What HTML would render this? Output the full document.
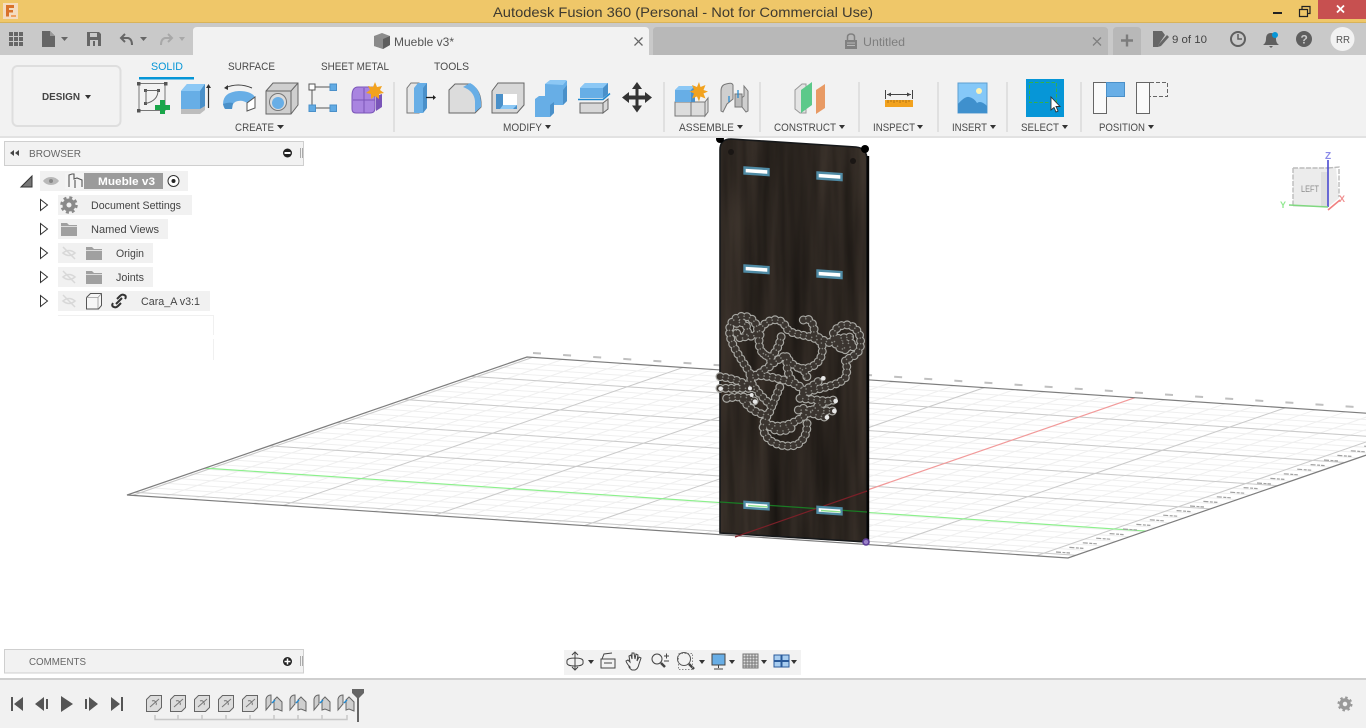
<!DOCTYPE html>
<html lang="en"><head><meta charset="utf-8"><title>Autodesk Fusion 360</title>
<style>
html,body{margin:0;padding:0;background:#fff;width:1366px;height:728px;overflow:hidden}
svg{display:block;position:absolute;left:0;top:0}
text{font-family:"Liberation Sans",sans-serif;font-size:11px;fill:#4a4a4a}
.g{fill:none;stroke:#efefef;stroke-width:1;vector-effect:non-scaling-stroke}
.n{fill:none;vector-effect:non-scaling-stroke}
.t{font-size:11px;fill:#4a4a4a}
</style></head><body>
<svg width="1366" height="728" viewBox="0 0 1366 728" xmlns="http://www.w3.org/2000/svg">
<defs>
<filter id="wood" x="0" y="0" width="1" height="1" color-interpolation-filters="sRGB">
<feTurbulence type="fractalNoise" baseFrequency="0.07 0.005" numOctaves="3" seed="7"/>
<feColorMatrix values="0.2 0 0 0 0.1  0.17 0 0 0 0.085  0.15 0 0 0 0.07  0 0 0 0 1"/>
</filter>
<linearGradient id="woodg" x1="0" x2="1" y1="0" y2="0"><stop offset="0" stop-color="#000" stop-opacity=".02"/><stop offset=".5" stop-color="#000" stop-opacity=".22"/><stop offset="1" stop-color="#000" stop-opacity=".04"/></linearGradient>
<clipPath id="plank"><path d="M731 139L856 147Q867 148 867 160V542L720 533V150Q720 139 731 139Z"/></clipPath>
<path id="knot" d="M150 220C120 170 80 120 90 80C100 40 160 35 172 85C178 110 150 115 125 100M110 70C130 60 150 80 140 105C125 125 105 110 110 85M175 100C190 60 240 40 260 85C275 110 340 100 365 130C375 170 350 210 300 205C270 195 265 170 262 180M180 105C170 140 185 170 215 170C240 140 240 120 245 105M190 160C210 170 220 185 205 205M260 170C260 220 265 240 310 270C340 260 360 240 365 235M60 230C100 235 140 250 165 270M60 265L150 265M80 295C110 290 140 285 165 305M150 225C200 225 270 240 310 265M250 170C230 180 180 220 150 240C170 280 200 300 215 320L240 260M130 300C150 330 180 345 205 345M215 320C210 345 185 360 190 390C200 430 250 445 290 435C315 420 325 390 320 360M200 370C240 390 280 370 310 350C340 330 370 300 405 300M295 330L400 333M310 325C340 345 365 350 380 352M300 295L400 305M210 380C230 400 260 395 280 380M310 280C350 265 410 260 435 235C445 210 440 190 435 180C460 170 490 160 480 110C470 70 420 60 400 100C400 130 410 145 440 150M420 130L455 130M415 115L460 110M425 145L460 140M310 60C325 45 350 80 340 100C360 120 400 135 395 125M300 205C320 215 330 235 310 235"/>
</defs>

<!-- GRID -->
<g transform="matrix(941 63 400 -138 127 495)">
<path class="g" d="M.006 0v1m.032-1v1m.032-1v1m.032-1v1m.032-1v1m.032-1v1m.032-1v1m.032-1v1m.032-1v1m.032-1v1m.032-1v1m.032-1v1m.032-1v1m.032-1v1m.032-1v1m.032-1v1m.032-1v1m.032-1v1m.032-1v1m.032-1v1m.032-1v1m.032-1v1m.032-1v1m.032-1v1m.032-1v1m.032-1v1m.032-1v1m.032-1v1m.032-1v1m.032-1v1m.032-1v1"/>
<path class="g" d="M0 .02h1m-1 .0336h1m-1 .0336h1m-1 .0336h1m-1 .0336h1m-1 .0336h1m-1 .0336h1m-1 .0336h1m-1 .0336h1m-1 .0336h1m-1 .0336h1m-1 .0336h1m-1 .0336h1m-1 .0336h1m-1 .0336h1m-1 .0336h1m-1 .0336h1m-1 .0336h1m-1 .0336h1m-1 .0336h1m-1 .0336h1m-1 .0336h1m-1 .0336h1m-1 .0336h1m-1 .0336h1m-1 .0336h1m-1 .0336h1m-1 .0336h1m-1 .0336h1"/>
<path class="n" stroke="#cacaca" stroke-width="1" d="M.166 0v1M.326 0v1M.486 0v1M.806 0v1M.966 0v1M.006 0v1M0 .02h1M0 .356h1M0 .524h1M0 .692h1M0 .86h1"/>
<path class="n" stroke="#8cf08c" stroke-width="1.200" d="M0 .195h1"/>
<path class="n" stroke="#f29a9a" stroke-width="1.200" d="M.646 0v1"/>
<path class="n" stroke="#7d7d7d" stroke-width="1.200" d="M0 0h1v1h-1z"/>
</g>
<path d="M533 353L1366 407.700" stroke="#c0c0c0" stroke-width="2" stroke-dasharray="8 22.160" fill="none"/>
<path d="M1056 552l14 1m-.6-5.600l14 1m-.6-5.600l14 1m-.6-5.600l14 1m-.6-5.600l14 1m-.6-5.600l14 1m-.6-5.600l14 1m-.6-5.600l14 1m-.6-5.600l14 1m-.6-5.600l14 1m-.6-5.600l14 1m-.6-5.600l14 1m-.6-5.600l14 1m-.6-5.600l14 1m-.6-5.600l14 1m-.6-5.600l14 1m-.6-5.600l14 1m-.6-5.600l14 1m-.6-5.600l14 1m-.6-5.600l14 1m-.6-5.600l14 1m-.6-5.600l14 1m-.6-5.600l14 1m-.6-5.600l14 1" stroke="#a0a0a0" stroke-width="1.200" stroke-dasharray="5 1.500 3 1" fill="none"/>

<!-- PLANK -->
<g clip-path="url(#plank)">
<rect x="715" y="135" width="156" height="412" fill="#2e2723" filter="url(#wood)"/>
<rect x="715" y="135" width="156" height="412" fill="url(#woodg)"/>
</g>
<path d="M731 139L856 147Q867 148 867 160V542L720 533V150Q720 139 731 139Z" fill="none" stroke="#16181a" stroke-width="1.600"/>
<path d="M868 156V543" stroke="#050505" stroke-width="2.400"/>
<circle cx="720" cy="139" r="4" fill="#000"/><circle cx="865" cy="149" r="4" fill="#000"/>
<circle cx="731" cy="152" r="3" fill="#1a1614"/><circle cx="853" cy="161" r="3" fill="#1a1614"/>
<path d="M720 502L867 512" stroke="#1a7a24" stroke-width="1.300"/>
<path d="M735 537L867 491" stroke="#7a2028" stroke-width="1.200"/>
<g fill="#fff" stroke="#4f8ba5" stroke-width="2.400">
<path d="M744.500 167.500l24 1.600v6l-24-1.600z"/><path d="M817.500 172.500l24 1.600v6l-24-1.600z"/>
<path d="M744.500 265.500l24 1.600v6l-24-1.600z"/><path d="M817.500 270.500l24 1.600v6l-24-1.600z"/>
<path d="M744.500 501.800l24 1.600v6l-24-1.600z"/><path d="M817.500 506.800l24 1.600v6l-24-1.600z"/>
</g>
<path d="M748 505.500l20 1.400M821 510.500l20 1.400" stroke="#8fe28f" stroke-width="1.400"/>
<!-- knot -->
<g transform="translate(700 300) scale(.3333)" fill="none" stroke-linecap="round" stroke-linejoin="round">
<use href="#knot" stroke="#a8a8a3" stroke-width="27" stroke-dasharray="0 17"/>
<use href="#knot" stroke="#3b3530" stroke-width="20" stroke-dasharray="0 17"/>
<use href="#knot" stroke="#85857f" stroke-width="5" stroke-dasharray="0 17" stroke-dashoffset="8.500"/>
<g fill="#e8e8e8" stroke="none"><circle cx="62" cy="266" r="7"/><circle cx="165" cy="305" r="7"/><circle cx="155" cy="285" r="6"/><circle cx="150" cy="265" r="6"/><circle cx="370" cy="235" r="7"/><circle cx="407" cy="303" r="7"/><circle cx="403" cy="333" r="7"/><circle cx="381" cy="352" r="7"/></g>
</g>
<circle cx="866" cy="542" r="3" fill="#9a80c8" stroke="#5c3d96" stroke-width="1.600"/>

<!-- VIEWCUBE -->
<path d="M1293 168L1336 167L1339 198L1328 207H1293Z" fill="#ececec"/>
<path d="M1321 172H1328V207H1321Z" fill="#dedede"/>
<path d="M1293 168H1328M1293 168V205M1328 168L1339 167V197" fill="none" stroke="#bcbcbc" stroke-width="1.400" stroke-dasharray="5 1.500"/>
<text x="1301" y="192" style="font-size:9px;fill:#8c8c8c" textLength="18" lengthAdjust="spacingAndGlyphs">LEFT</text>
<path d="M1328 207V160" stroke="#4a4ad0" stroke-width="1.600"/><path d="M1328 207L1289 205" stroke="#80d880" stroke-width="1.600"/><path d="M1328 210L1340 200" stroke="#f08080" stroke-width="1.600"/>
<text x="1325" y="159" style="font-size:10px;fill:#8a8ae8;font-weight:bold">Z</text>
<text x="1280" y="208" style="font-size:9px;fill:#90e890;font-weight:bold">Y</text>
<text x="1339" y="202" style="font-size:9px;fill:#f09090;font-weight:bold">X</text>

<!-- TITLE BAR -->
<rect width="1366" height="23" fill="#efc769"/><rect y="22" width="1366" height="1" fill="#d8b35a"/>
<rect x="3" y="3" width="15" height="16" fill="#f4dcc0"/>
<path d="M6 5h8v3h-5v2h4v2.500h-4v4h-3z" fill="#d9722a"/><path d="M11 15h5v2h-5z" fill="#f0a060"/>
<text x="493" y="17" style="font-size:14px;fill:#3e3a30" textLength="380" lengthAdjust="spacingAndGlyphs">Autodesk Fusion 360 (Personal - Not for Commercial Use)</text>
<rect x="1273" y="12" width="9" height="2" fill="#222"/>
<path d="M1299.500 9.500h8v7h-8zM1302 9V6.500h8v7h-2.500" fill="none" stroke="#222" stroke-width="1.200"/>
<rect x="1318" y="0" width="48" height="19" fill="#c75050"/>
<path d="M1337 5.500l7 7M1344 5.500l-7 7" stroke="#fff" stroke-width="1.800"/>

<!-- TAB ROW -->
<rect y="23" width="1366" height="32" fill="#c9c9c9"/>
<path d="M193 55V31q0-4 4-4H645q4 0 4 4V55z" fill="#f2f2f2"/>
<path d="M653 55V31q0-4 4-4H1104q4 0 4 4V55z" fill="#b8b8b8"/>
<path d="M1113 55V31q0-4 4-4H1137q4 0 4 4V55z" fill="#b8b8b8"/>
<g fill="#666"><rect x="9" y="32" width="4" height="4"/><rect x="14" y="32" width="4" height="4"/><rect x="19" y="32" width="4" height="4"/><rect x="9" y="37" width="4" height="4"/><rect x="14" y="37" width="4" height="4"/><rect x="19" y="37" width="4" height="4"/><rect x="9" y="42" width="4" height="4"/><rect x="14" y="42" width="4" height="4"/><rect x="19" y="42" width="4" height="4"/></g>
<path d="M42 31h8l5 5v11H42z" fill="#666"/><path d="M50 31v5h5z" fill="#999"/><path d="M61 37h7l-3.500 4z" fill="#666"/>
<path d="M87 32h12l2 2v12H87z" fill="#666"/><rect x="90" y="33" width="7" height="4" fill="#c9c9c9"/><rect x="90" y="40" width="8" height="6" fill="#c9c9c9"/><rect x="93" y="41" width="2" height="5" fill="#666"/>
<path d="M125 34l-4 4 4 4M121 38h7q4 1 4 7" fill="none" stroke="#666" stroke-width="2"/><path d="M140 37h7l-3.500 4z" fill="#666"/>
<path d="M168 34l4 4-4 4M172 38h-7q-4 1-4 7" fill="none" stroke="#a8a8a8" stroke-width="2"/><path d="M179 37h6l-3 4z" fill="#a8a8a8"/>
<path d="M374 36l8-3 8 3v9l-7 4-9-3z" fill="#8c8c8c"/><path d="M374 36l9 3v10l-9-3z" fill="#8a8a8a"/><path d="M383 39l7-3v9l-7 4z" fill="#5e5e5e"/>
<text x="394" y="46" style="font-size:12px;fill:#555" textLength="60" lengthAdjust="spacingAndGlyphs">Mueble v3*</text>
<path d="M634.500 37.500l8 8M642.500 37.500l-8 8" stroke="#666" stroke-width="1.300"/>
<rect x="845" y="40" width="12" height="9" fill="#808080"/><path d="M847.500 40v-3q0-3 3.500-3t3.500 3v3" fill="none" stroke="#808080" stroke-width="1.500"/>
<path d="M847 43h8M847 45.500h8" stroke="#b8b8b8"/>
<text x="863" y="46" style="font-size:12px;fill:#7e7e7e" textLength="42" lengthAdjust="spacingAndGlyphs">Untitled</text>
<path d="M1093 37.500l8 8M1101 37.500l-8 8" stroke="#808080" stroke-width="1.300"/>
<path d="M1121 40.500h12M1127 34.500v12" stroke="#7c7c7c" stroke-width="2.400"/>
<path d="M1153 31h9l3 4-6 9-1 3h-5z" fill="#666"/><path d="M1159 44l8-9 2 2-8 9-3 1z" fill="#666"/>
<text x="1172" y="43" style="font-size:11px;fill:#444" textLength="35" lengthAdjust="spacingAndGlyphs">9 of 10</text>
<circle cx="1238" cy="39" r="7" fill="#c9c9c9" stroke="#5f5f5f" stroke-width="2"/><path d="M1238 34v5h4" fill="none" stroke="#5f5f5f" stroke-width="1.500"/>
<path d="M1271 33q5 0 5 6 0 4 3 6h-16q3-2 3-6 0-6 5-6zM1269 46h4l-2 2z" fill="#5f5f5f"/><circle cx="1275" cy="35" r="3" fill="#0696d7"/>
<circle cx="1304" cy="39" r="8" fill="#5f5f5f"/><text x="1300.500" y="43.500" style="font-size:12px;font-weight:bold;fill:#c9c9c9">?</text>
<circle cx="1342.500" cy="39" r="12" fill="#f2f2f2"/><text x="1336" y="43" style="font-size:10.500px;fill:#555" textLength="14" lengthAdjust="spacingAndGlyphs">RR</text>

<!-- TOOLBAR -->
<rect y="55" width="1366" height="81" fill="#f2f2f2"/><rect y="136" width="1366" height="2" fill="#e2e2e2"/>
<rect x="12.500" y="66" width="108" height="60" rx="5" fill="#f2f2f2" stroke="#dedede" stroke-width="2"/>
<text x="42" y="100" style="font-size:10.500px;font-weight:bold;fill:#444" textLength="38" lengthAdjust="spacingAndGlyphs">DESIGN</text><path d="M85 95h6l-3 4z" fill="#333"/>
<text x="151" y="70" style="fill:#0696d7;font-size:11px" textLength="32" lengthAdjust="spacingAndGlyphs">SOLID</text><rect x="139" y="77" width="55" height="2.500" fill="#0696d7"/>
<text class="t" x="228" y="70" textLength="47" lengthAdjust="spacingAndGlyphs">SURFACE</text>
<text class="t" x="321" y="70" textLength="68" lengthAdjust="spacingAndGlyphs">SHEET METAL</text>
<text class="t" x="434" y="70" textLength="35" lengthAdjust="spacingAndGlyphs">TOOLS</text>
<g fill="#e0e0e0"><rect x="393" y="82" width="2" height="50"/><rect x="663" y="82" width="2" height="50"/><rect x="759" y="82" width="2" height="50"/><rect x="858" y="82" width="2" height="50"/><rect x="937" y="82" width="2" height="50"/><rect x="1006" y="82" width="2" height="50"/><rect x="1080" y="82" width="2" height="50"/></g>
<text class="t" x="235" y="131" textLength="39" lengthAdjust="spacingAndGlyphs">CREATE</text><path d="M277 125h7l-3.500 4z" fill="#333"/>
<text class="t" x="503" y="131" textLength="39" lengthAdjust="spacingAndGlyphs">MODIFY</text><path d="M545 125h6l-3 4z" fill="#333"/>
<text class="t" x="679" y="131" textLength="55" lengthAdjust="spacingAndGlyphs">ASSEMBLE</text><path d="M737 125h6l-3 4z" fill="#333"/>
<text class="t" x="774" y="131" textLength="62" lengthAdjust="spacingAndGlyphs">CONSTRUCT</text><path d="M839 125h6l-3 4z" fill="#333"/>
<text class="t" x="873" y="131" textLength="42" lengthAdjust="spacingAndGlyphs">INSPECT</text><path d="M917 125h6l-3 4z" fill="#333"/>
<text class="t" x="952" y="131" textLength="35" lengthAdjust="spacingAndGlyphs">INSERT</text><path d="M990 125h6l-3 4z" fill="#333"/>
<text class="t" x="1021" y="131" textLength="38" lengthAdjust="spacingAndGlyphs">SELECT</text><path d="M1062 125h6l-3 4z" fill="#333"/>
<text class="t" x="1099" y="131" textLength="46" lengthAdjust="spacingAndGlyphs">POSITION</text><path d="M1148 125h6l-3 4z" fill="#333"/>

<!-- sketch -->
<path d="M139 83.500h26v27h-26z" fill="none" stroke="#777" stroke-width="1"/>
<g fill="#555"><rect x="137" y="82" width="3.500" height="3.500"/><rect x="164" y="82" width="3.500" height="3.500"/><rect x="137" y="109" width="3.500" height="3.500"/><rect x="144" y="89" width="3" height="3"/><rect x="157" y="89" width="3" height="3"/><rect x="144" y="102" width="3" height="3"/></g>
<path d="M146 90.500h12q0 10-12 13z" fill="none" stroke="#666"/>
<path d="M160 100h5v5h5v5h-5v4h-5v-4h-5v-5h5z" fill="#1aa64a"/>
<!-- extrude -->
<path d="M181 91l6-7h18v23l-5 2H181z" fill="#67aee6"/><path d="M181 91l6-7h18l-5 7z" fill="#8cc8f5"/><path d="M200 91l5-7v22l-5 3z" fill="#4a90c9"/>
<path d="M181 109h19v5H181zM200 109l5-3v4l-5 4z" fill="#bdbdbd"/>
<path d="M208.500 108V86" stroke="#333" stroke-width="1.200"/><path d="M206 88l2.500-4 2.500 4z" fill="#333"/>
<!-- revolve -->
<path d="M225 88q13-6 27 0" fill="none" stroke="#444" stroke-width="1"/><path d="M224 88l4-3v5z" fill="#333"/>
<path d="M223 104q0-12 16-13 12 0 16 6l-8 6q-4-3-9-2-6 1-6 8h-7z" fill="#68aee6"/>
<path d="M223 104q1 5 3 5h6l1-6q-5-1-10 1z" fill="#4a90c9"/>
<path d="M247 103l8-6v11l-8 3z" fill="#fff" stroke="#555"/>
<!-- hole -->
<path d="M266 91l7-8h25v22l-7 9H266z" fill="#cfcfcf" stroke="#666" stroke-width="1"/><path d="M266 91h25l7-8M291 91v23" fill="none" stroke="#666"/>
<circle cx="278" cy="102" r="8.500" fill="#dcdcdc" stroke="#777"/><circle cx="278" cy="103" r="6" fill="#68aee6"/>
<!-- rect pattern -->
<path d="M312 87h21M312 87v21M312 108h21" stroke="#555" fill="none"/>
<rect x="309" y="84" width="6" height="6" fill="#fff" stroke="#555"/>
<g fill="#62abe4" stroke="#4a90c9"><rect x="330" y="84" width="6.500" height="6.500"/><rect x="309" y="105" width="6.500" height="6.500"/><rect x="330" y="105" width="6.500" height="6.500"/></g>
<!-- form -->
<path d="M358 87h14q3 0 3 3v18q0 5-5 5h-14q-4 0-4-4V96q0-9 6-9z" fill="#a984e0" stroke="#7a55b8"/>
<path d="M353 100h22M364 88v25" stroke="#7a55b8"/><path d="M376 96l6-2v13l-6 4z" fill="#7a55b8"/>
<path d="M375 82l2 5 5-1-2 4 4 3-5 1 0 5-4-3-4 3 0-5-5-1 4-3-2-4 5 1z" fill="#f2a21e"/>

<!-- press pull -->
<path d="M407 88l4-5h8v30h-12z" fill="#e6e6e6" stroke="#777"/><path d="M414 88l4-5h9v25l-4 5h-9z" fill="#67aee6"/><path d="M423 88l4-5v25l-4 5z" fill="#4a90c9"/>
<path d="M426 97.500h9" stroke="#222" stroke-width="1.300"/><path d="M433 95l3 2.500-3 2.500z" fill="#222"/>
<!-- fillet -->
<path d="M449 113V90l6-6h14q11 4 12 18v5l-6 6z" fill="#dcdcdc" stroke="#666"/>
<path d="M463 87l7-4q10 5 11 19v5l-6 5v-11q-1-10-12-14z" fill="#68aee6"/>
<!-- shell -->
<path d="M492 91l6-8h26v22l-7 8h-25z" fill="#d8d8d8" stroke="#666"/>
<rect x="496" y="94" width="21" height="15" fill="#fff"/><path d="M496 94h7v11h14v4h-21z" fill="#4a90c9"/><path d="M503 105h14l-4 4h-13z" fill="#8cc8f5"/>
<!-- combine -->
<path d="M545 93v-9l5-3h17v20l-4 4h-9v8l-4 4h-15v-18l4-3h6z" fill="#67aee6"/><path d="M563 90l4-5v16l-4 4z" fill="#4a90c9"/><path d="M545 84l5-4h17l-4 5z" fill="#8cc8f5"/><path d="M550 105l4-3v11l-4 4z" fill="#4a90c9"/>
<!-- split -->
<path d="M580 88l5-5h23v11l-5 4h-23z" fill="#67aee6"/><path d="M580 88l5-5h23l-5 5z" fill="#8cc8f5"/><path d="M603 88l5-5v11l-5 4z" fill="#4a90c9"/>
<path d="M578 99.500h25l7-6" stroke="#1e88d0" stroke-width="1.500" fill="none"/>
<path d="M580 103h23v10h-23zM603 103l5-4v10l-5 4z" fill="#d8d8d8" stroke="#666"/>
<!-- move -->
<path d="M637 82l5 7h-3.500v6.500H645V92l7 5.500-7 5.500v-3.500h-6.500v6h3.500l-5 7-5-7h3.500v-6H629v3.500l-7-5.500 7-5.500v3.500h6.500V89H632z" fill="#333"/>

<!-- new component -->
<path d="M675 102h16v14h-16zM691 102h14v14h-14zM705 102l3-4v14l-3 4z" fill="#dcdcdc" stroke="#777"/>
<path d="M675 90l4-4h16v16h-20z" fill="#67aee6"/><path d="M675 90l4-4h16l-4 4z" fill="#8cc8f5"/><path d="M691 90l4-4v16h-4z" fill="#4a90c9"/>
<path d="M699 82l1.500 5 5-2-2 5 4.500 1.500-4.500 2 2 5-5-2-1.500 5-2-5-5 2 2-5-4.500-2 4.500-1.500-2-5 5 2z" fill="#f2a21e"/>
<!-- joint -->
<path d="M721 91q0-6 5-7 6-2 7 1v14l-6 5-4 8-2-1z" fill="#cfcfcf" stroke="#777"/>
<path d="M739 100l5-4V86l4 5v20l-2 1-4-5h-3z" fill="#cfcfcf" stroke="#777"/><rect x="735" y="94" width="7" height="13" fill="#bcbcbc" stroke="#777"/>
<path d="M729 96v6M738 90v8" stroke="#1e88d0" stroke-width="1.200"/>

<!-- construct -->
<path d="M795 90l7-6h4v29h-6l-5-4z" fill="#e4e4e4" stroke="#999"/>
<path d="M801 90l11-8v23l-11 8z" fill="#5cc98a"/>
<path d="M816 90l9-6v24l-9 6z" fill="#e89a64"/>
<!-- inspect -->
<rect x="885" y="100" width="28" height="7" fill="#f2a21e"/><path d="M888 100v3M891 100v2M894 100v3M897 100v2M900 100v3M903 100v2M906 100v3M909 100v2" stroke="#a56a10" stroke-width=".8"/>
<path d="M885.500 90v9M912.500 90v9M887 94.500h24" stroke="#444"/><path d="M887 94.500l4-2v4zM911 94.500l-4-2v4z" fill="#444"/>
<!-- insert -->
<rect x="958" y="83" width="29" height="30" fill="#85c8f8" stroke="#5d9fd0"/>
<circle cx="979" cy="91" r="3" fill="#fdf3b4"/>
<path d="M958 113V104q7-8 11-7 5 1 8 6 4-3 10 3v7z" fill="#3f90cd"/>
<!-- select -->
<rect x="1026" y="79" width="38" height="38" fill="#0696d7"/>
<rect x="1029.500" y="82.500" width="27" height="20" fill="none" stroke="#35b04a" stroke-width="1" stroke-dasharray="3.500 2"/>
<path d="M1051 97v13l3-2.500 2 4.500 2-1-2-4.500h4z" fill="#fff" stroke="#333" stroke-width=".9"/>
<!-- position -->
<rect x="1093.500" y="82.500" width="13" height="31" fill="#fafafa" stroke="#666"/>
<rect x="1106.500" y="82.500" width="18" height="14" fill="#68aee6" stroke="#4a90c9"/>
<rect x="1136.500" y="82.500" width="13" height="31" fill="#fafafa" stroke="#666"/>
<path d="M1150 82.500h17.500v14H1150" fill="none" stroke="#666" stroke-dasharray="4 2"/>

<!-- BROWSER -->
<rect x="4.500" y="141.500" width="299" height="24" fill="#f2f2f2" stroke="#cfcfcf"/>
<path d="M10 153l4-3v6zM15 153l4-3v6z" fill="#444"/>
<text x="29" y="157" style="font-size:10.500px;fill:#666" textLength="52" lengthAdjust="spacingAndGlyphs">BROWSER</text>
<circle cx="287.500" cy="153" r="4.500" fill="#222"/><rect x="284.500" y="152" width="6" height="2" fill="#fff"/>
<path d="M300.500 148v10M302.500 148v10" stroke="#aaa"/>

<path d="M21 187L32 176V187Z" fill="#777" stroke="#333"/>
<rect x="40" y="171" width="148" height="20" fill="#f1f1f1"/>
<rect x="65" y="173" width="98" height="16" fill="#9b9b9b"/>
<rect x="65" y="173" width="19" height="16" fill="#f4f4f4"/>
<path d="M51 177q5 0 8 4-3 4-8 4t-8-4q3-4 8-4z" fill="#b8b8b8"/><circle cx="51" cy="181" r="2" fill="#888"/>
<path d="M69 187v-12l3-1h2v5l3-1 5 2v7M75 180v8" fill="none" stroke="#555" stroke-width="1.100"/>
<text x="98" y="185" style="font-size:11px;font-weight:bold;fill:#fff" textLength="57" lengthAdjust="spacingAndGlyphs">Mueble v3</text>
<circle cx="173.500" cy="181" r="5.500" fill="#fff" stroke="#333"/><circle cx="173.500" cy="181" r="2" fill="#222"/>

<g fill="#f1f1f1"><rect x="58" y="195" width="134" height="20"/><rect x="58" y="219" width="110" height="20"/><rect x="58" y="243" width="95" height="20"/><rect x="58" y="267" width="95" height="20"/><rect x="58" y="291" width="152" height="20"/></g>
<g fill="#fff" stroke="#333"><path d="M40.500 199.500l7 5.500-7 5.500z"/><path d="M40.500 223.500l7 5.500-7 5.500z"/><path d="M40.500 247.500l7 5.500-7 5.500z"/><path d="M40.500 271.500l7 5.500-7 5.500z"/><path d="M40.500 295.500l7 5.500-7 5.500z"/></g>
<circle cx="69" cy="205" r="4.500" fill="none" stroke="#8a8a8a" stroke-width="4"/><circle cx="69" cy="205" r="7.500" fill="none" stroke="#8a8a8a" stroke-width="2.500" stroke-dasharray="3 2.900"/>
<text x="91" y="209" style="fill:#444" textLength="90" lengthAdjust="spacingAndGlyphs">Document Settings</text>
<path d="M61 223h6l2 2h8v11H61z" fill="#a0a0a0"/><rect x="61" y="226" width="16" height="1" fill="#ddd"/>
<text x="91" y="233" style="fill:#444" textLength="68" lengthAdjust="spacingAndGlyphs">Named Views</text>
<g stroke="#d8d8d8" fill="none" stroke-width="1.500"><path d="M63 253q6-5 12 0-6 5-12 0zM63 247l12 12"/><path d="M63 277q6-5 12 0-6 5-12 0zM63 271l12 12"/><path d="M63 301q6-5 12 0-6 5-12 0zM63 295l12 12"/></g>
<path d="M86 247h6l2 2h8v11H86z" fill="#a0a0a0"/><rect x="86" y="250" width="16" height="1" fill="#ddd"/>
<text x="116" y="257" style="fill:#444" textLength="28" lengthAdjust="spacingAndGlyphs">Origin</text>
<path d="M86 271h6l2 2h8v11H86z" fill="#a0a0a0"/><rect x="86" y="274" width="16" height="1" fill="#ddd"/>
<text x="116" y="281" style="fill:#444" textLength="28" lengthAdjust="spacingAndGlyphs">Joints</text>
<path d="M86.500 297.500l4-4h11v12l-3 3.500h-12z" fill="#f6f6f6" stroke="#555"/><path d="M98 297.500h-11.500M98 297.500l3.500-4M98 297.500v11" fill="none" stroke="#999" stroke-width=".8"/>
<path d="M113 303q-2 3 1 4 2 1 4-1l3-3M125 299q2-3-1-4-2-1-4 1l-3 3M116 304l6-6" fill="none" stroke="#333" stroke-width="2"/>
<text x="141" y="305" style="fill:#444" textLength="59" lengthAdjust="spacingAndGlyphs">Cara_A v3:1</text>
<path d="M58 315.500h155.500V335M213.500 339v21" fill="none" stroke="#f0f0f0"/>

<!-- COMMENTS -->
<rect x="4.500" y="649.500" width="299" height="23.500" fill="#f2f2f2" stroke="#cfcfcf"/>
<text x="29" y="665" style="font-size:10.500px;fill:#666" textLength="57" lengthAdjust="spacingAndGlyphs">COMMENTS</text>
<circle cx="287.500" cy="661.500" r="4.500" fill="#222"/><path d="M284.500 661.500h6M287.500 658.500v6" stroke="#fff" stroke-width="1.500"/>
<path d="M300.500 656v10M302.500 656v10" stroke="#aaa"/>

<!-- NAV BAR -->
<rect x="564" y="650" width="237" height="25" fill="#f2f2f2"/>
<g fill="none" stroke="#444" stroke-width="1">
<path d="M575 652v18M567 662q-1-4 8-4t8 4q1 4-8 4t-8-4z"/><path d="M572 655l3-3 3 3M572 667l3 3 3-3"/>
<path d="M601 659h14v9h-14zM604 663h8M602 659l2-5 8-1"/>
<path d="M630 667q-3-3-4-6l2-1 2 2-1-6 2-1 1 4v-6h2l1 6 1-5 2 1-1 6 2-4 2 1-2 6q-1 5-4 6h-3q-2-1-3-3z"/>
<circle cx="657" cy="659" r="5"/><path d="M661 663l4 4" stroke-width="2.500"/><path d="M664 656h5M666.500 653.500v5M664 661h5"/>
<circle cx="684" cy="659" r="6.500" stroke="#555"/><path d="M689 664l5 5" stroke-width="2.500"/><rect x="678.500" y="653.500" width="14" height="16" stroke="#888" stroke-dasharray="1.500 1.500"/>
</g>
<rect x="712" y="654" width="13" height="11" fill="#68aee6" stroke="#444"/><path d="M718.500 665v3M714 669h9" stroke="#444" fill="none"/>
<g stroke="#777" fill="none"><rect x="743" y="654" width="15" height="14" fill="#ddd"/><path d="M746 654v14M749 654v14M752 654v14M755 654v14M743 657h15M743 660h15M743 663h15M743 666h15"/></g>
<g fill="#a8cdf0" stroke="#2a5a9a"><rect x="774" y="655" width="7" height="5.500"/><rect x="782" y="655" width="7" height="5.500"/><rect x="774" y="661.500" width="7" height="5.500"/><rect x="782" y="661.500" width="7" height="5.500"/></g>
<g fill="#333"><path d="M588 660h6l-3 4z"/><path d="M699 660h6l-3 4z"/><path d="M729 660h6l-3 4z"/><path d="M761 660h6l-3 4z"/><path d="M791 660h6l-3 4z"/></g>

<!-- TIMELINE -->
<rect y="680" width="1366" height="48" fill="#f1f1f1"/><rect y="678" width="1366" height="2" fill="#cfcfcf"/>
<g fill="#555">
<rect x="11" y="697" width="2" height="14"/><path d="M23 697v14l-9-7z"/>
<path d="M35 704l9-7v14z"/><rect x="46" y="699" width="2" height="10"/>
<path d="M61 696l12 8-12 8z"/>
<rect x="85" y="699" width="2" height="10"/><path d="M89 697l9 7-9 7z"/>
<path d="M111 697l9 7-9 7z"/><rect x="121" y="697" width="2" height="14"/>
</g>
<g fill="#dcdcdc" stroke="#666">
<path d="M146.500 699.500l4-4h11v12l-4 4h-11z"/><path d="M170.500 699.500l4-4h11v12l-4 4h-11z"/><path d="M194.500 699.500l4-4h11v12l-4 4h-11z"/><path d="M218.500 699.500l4-4h11v12l-4 4h-11z"/><path d="M242.500 699.500l4-4h11v12l-4 4h-11z"/>
</g>
<g fill="none" stroke="#777"><path d="M150 707l9-8M152 701a3 3 0 0 1 4 4M174 707l9-8M176 701a3 3 0 0 1 4 4M198 707l9-8M200 701a3 3 0 0 1 4 4M222 707l9-8M224 701a3 3 0 0 1 4 4M246 707l9-8M248 701a3 3 0 0 1 4 4"/></g>
<g fill="#cfcfcf" stroke="#666">
<path d="M266 710v-11q1-4 5-4v9zM274 710v-10l3-3 5 5v9l-5-2z"/><path d="M290 710v-11q1-4 5-4v9zM298 710v-10l3-3 5 5v9l-5-2z"/><path d="M314 710v-11q1-4 5-4v9zM322 710v-10l3-3 5 5v9l-5-2z"/><path d="M338 710v-11q1-4 5-4v9zM346 710v-10l3-3 5 5v9l-5-2z"/>
</g>
<path d="M272 703l3-3M296 703l3-3M320 703l3-3M344 703l3-3" stroke="#1e88d0" stroke-width="1.400"/>
<path d="M155 715v4.500h192V715M178 715v4M202 715v4M226 715v4M250 715v4M274 715v4M298 715v4M322 715v4" fill="none" stroke="#c8c8c8" stroke-width="1.500"/>
<path d="M352 689h12v4l-5 5v24h-2V698l-5-5z" fill="#666"/>
<circle cx="1345" cy="704" r="4" fill="none" stroke="#999" stroke-width="3.500"/><circle cx="1345" cy="704" r="6.500" fill="none" stroke="#999" stroke-width="2" stroke-dasharray="2.500 2.600"/>
</svg>
</body></html>
